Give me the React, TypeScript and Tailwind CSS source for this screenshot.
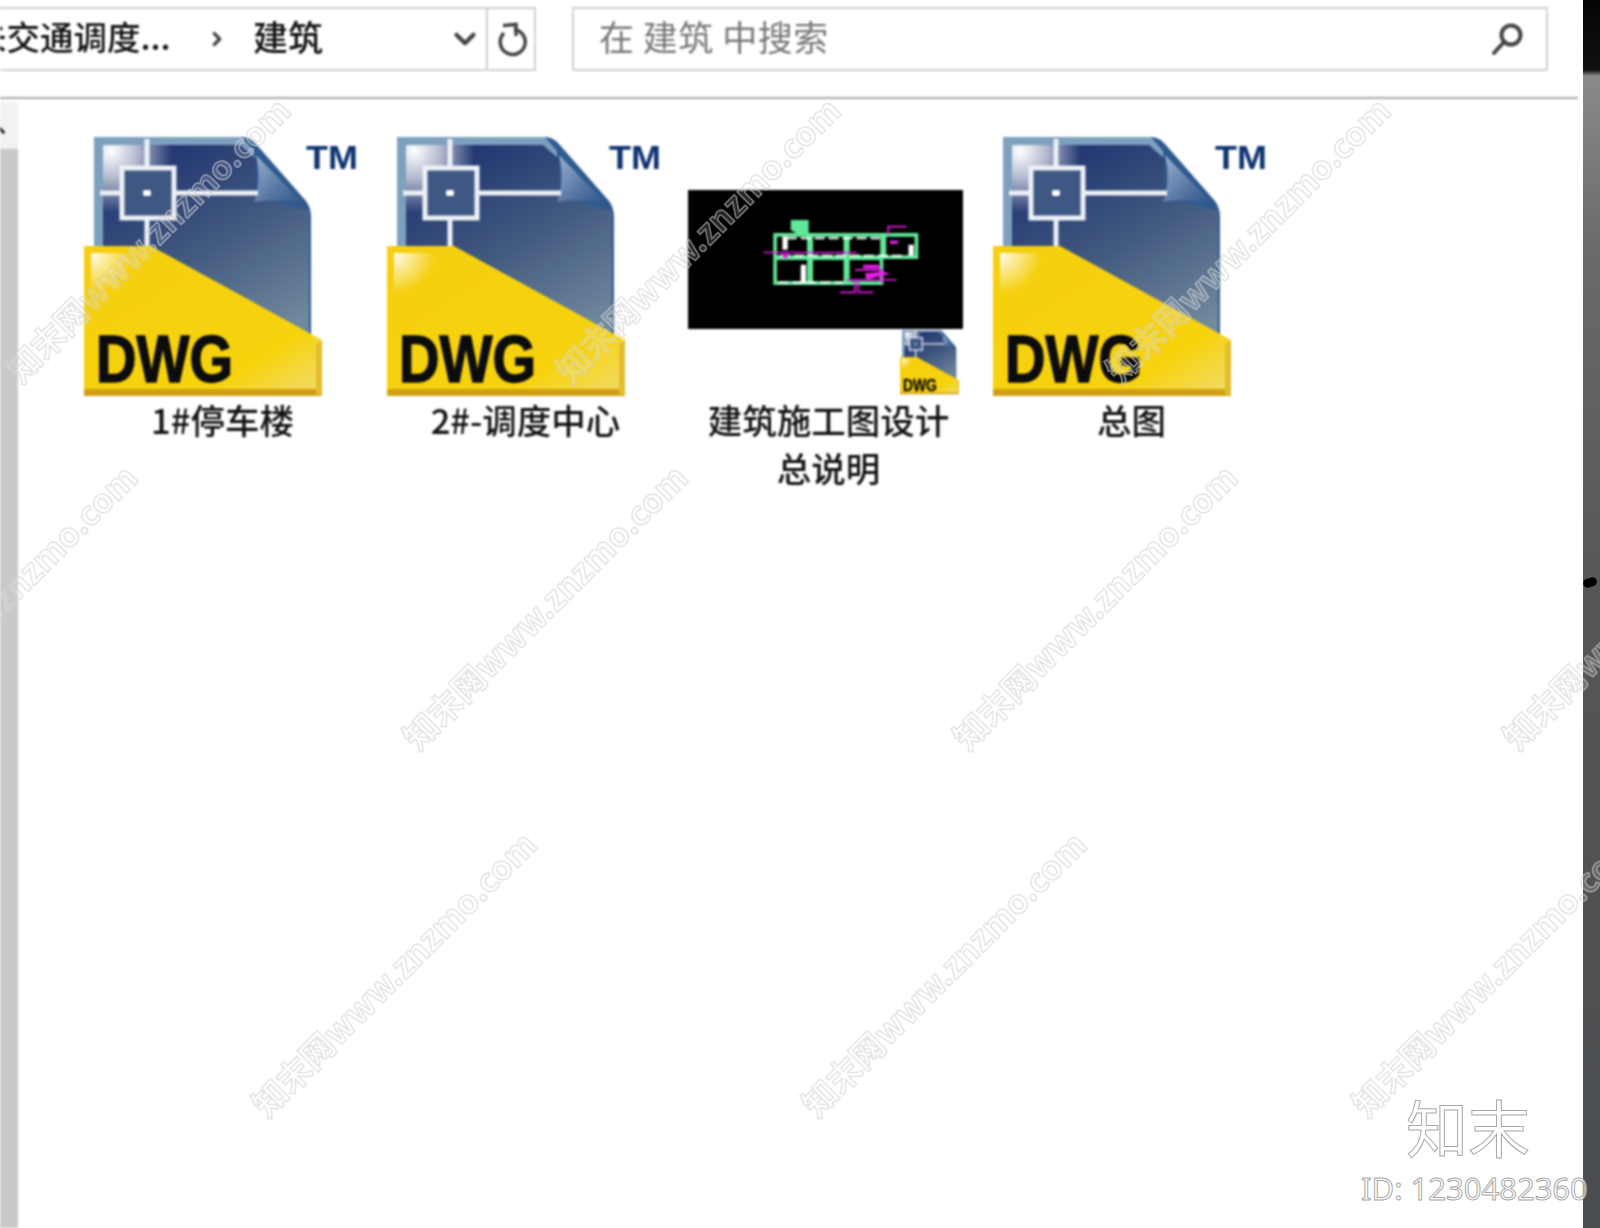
import { ChevronDown, ChevronRight } from 'lucide-react';

const CJK = "font-['Noto_Sans_CJK_SC','Noto_Sans',sans-serif]";

const watermarks = [
  { x: 147, y: 239 },
  { x: 697, y: 239 },
  { x: 1247, y: 239 },
  { x: -6, y: 606 },
  { x: 544, y: 606 },
  { x: 1094, y: 606 },
  { x: 1644, y: 606 },
  { x: 393, y: 973 },
  { x: 943, y: 973 },
  { x: 1493, y: 973 },
];

function DwgIcon({ width, badge }: { width: number; badge?: boolean }) {
  return (
    <svg width={width} height={(width * 258) / 238} viewBox="0 0 238 258" className="block overflow-visible">
      <defs>
        <linearGradient id="docFill" x1="0.2" y1="0" x2="0.8" y2="1">
          <stop offset="0" stopColor="#1e3270" />
          <stop offset="0.5" stopColor="#41587f" />
          <stop offset="1" stopColor="#70899e" />
        </linearGradient>
        <linearGradient id="foldFill" x1="0" y1="0" x2="1" y2="1">
          <stop offset="0" stopColor="#9db3cf" />
          <stop offset="0.5" stopColor="#5c7ca8" />
          <stop offset="1" stopColor="#2a4f86" />
        </linearGradient>
        <radialGradient id="glow" cx="0.08" cy="0.06" r="0.6">
          <stop offset="0" stopColor="#ffffff" />
          <stop offset="0.45" stopColor="#ffffff" stopOpacity="0.65" />
          <stop offset="1" stopColor="#ffffff" stopOpacity="0" />
        </radialGradient>
        <linearGradient id="yellowFill" x1="0" y1="0" x2="1" y2="1">
          <stop offset="0" stopColor="#f5cf10" />
          <stop offset="0.75" stopColor="#f7d30e" />
          <stop offset="1" stopColor="#f0dc70" />
        </linearGradient>
        <radialGradient id="bevel" cx="0" cy="0" r="0.75">
          <stop offset="0" stopColor="#ffffff" stopOpacity="0.95" />
          <stop offset="1" stopColor="#ffffff" stopOpacity="0" />
        </radialGradient>
      </defs>
      {/* sheet */}
      <path d="M10 0H158Q166 0 172 7L222 64Q227 71 227 80V204H10Z" fill="#2e5a90" />
      <path d="M10 0H158L170 14V20H19V110H10Z" fill="#7ea0bf" />
      <path d="M19 8H156L172 22V60L225 74V204H19Z" fill="url(#docFill)" />
      <path d="M19 8H120V110H19Z" fill="url(#glow)" />
      <path d="M172 18Q178 44 170 65Q198 60 222 69Z" fill="url(#foldFill)" />
      {/* crosshair */}
      <path d="M63 2V110M16 56H174" stroke="#eef1f6" strokeWidth="5" fill="none" />
      <rect x="38" y="31" width="52" height="50" fill="#3f5883" stroke="#eef1f6" strokeWidth="5" />
      <rect x="59" y="53" width="8" height="6" rx="2" fill="#ffffff" />
      {/* yellow wedge */}
      <path d="M0 109H67L238 203V258H0Z" fill="url(#yellowFill)" />
      <path d="M7 116H62V170H7Z" fill="url(#bevel)" />
      <path d="M0 252H238V259H0Z" fill="#d09f14" />
      <path d="M232 207L238 203V258H232Z" fill="#e3bd2b" />
      <text
        x="12"
        y="245"
        textLength="137"
        lengthAdjust="spacingAndGlyphs"
        fontFamily="'Liberation Sans', sans-serif"
        fontWeight="700"
        fontSize="67"
        fill="#0c0c0c"
        stroke="#0c0c0c"
        strokeWidth="1.5"
      >
        DWG
      </text>
      {badge && (
        <text
          x="222"
          y="32"
          textLength="52"
          lengthAdjust="spacingAndGlyphs"
          fontFamily="'Liberation Sans', sans-serif"
          fontWeight="700"
          fontSize="33"
          fill="#0d3270"
        >
          TM
        </text>
      )}
    </svg>
  );
}

function PlanThumb() {
  return (
    <div className="w-[275px] h-[139px] bg-black">
      <svg width="275" height="139" viewBox="55 60 823 418" className="block">
        <path d="M362 150H416V190H380L362 180Z" fill="#5fe89a" />
        <path d="M315 195H740V262H315ZM315 265H635V340H315Z" fill="none" stroke="#62e89a" strokeWidth="11" />
        <path d="M420 195V340M530 195V340M640 195V262" stroke="#62e89a" strokeWidth="18" fill="none" />
        <path d="M345 200V240M400 285V340M724 225V258" stroke="#ffffff" strokeWidth="16" fill="none" />
        <path d="M330 258H700M325 338H520M350 205H630" stroke="#ffffff" strokeWidth="6" strokeDasharray="30 12" fill="none" />
        <path d="M280 248H560M530 330H680M510 368H555V335M565 335V368H610M655 195V170H710M555 300H635V340"
          stroke="#e81ee8" strokeWidth="5" fill="none" />
        <path d="M580 285H625L632 296H580ZM585 310L640 305L660 312L590 330Z" fill="#e81ee8" />
        <rect x="660" y="212" width="24" height="10" fill="#e81ee8" />
        <rect x="338" y="252" width="16" height="12" fill="#e81ee8" />
      </svg>
    </div>
  );
}

function Label({ lines }: { lines: string[] }) {
  return (
    <div className={`text-center text-[#111] text-[34.5px] leading-[48px] -mt-[1px] font-medium ${CJK}`}>
      {lines.map((l) => (
        <div key={l}>{l}</div>
      ))}
    </div>
  );
}

export default function App() {
  return (
    <div className="relative flex w-[1600px] h-[1228px] overflow-hidden bg-white">
      <div className="flex flex-col w-[1583px] blur-[0.8px]">
        {/* Address and search bars */}
        <div className="w-[1578px] h-[99px] border-b-2 border-[#a8a8a8] flex items-start gap-[36px] pt-[7px]">
          <div className="flex w-[536px] h-[64px] border-2 border-l-0 border-[#d0d0d0] overflow-hidden">
            <div className={`flex-1 flex items-center text-[35px] text-[#111] font-medium whitespace-nowrap pb-[5px] ${CJK}`}>
              <span className="-ml-[27px] w-[199px] shrink-0 text-[33.5px]">未交通调度...</span>
              <ChevronRight size={22} strokeWidth={3.5} className="text-[#444] ml-[34px] mt-[5px] shrink-0" />
              <span className="ml-[25px]">建筑</span>
              <ChevronDown size={34} strokeWidth={3} className="text-[#444] ml-auto mr-[4px] mt-[5px] shrink-0" />
            </div>
            <div className="w-[48px] border-l-2 border-[#d0d0d0] flex items-center justify-center text-[#444]">
              <svg width="38" height="38" viewBox="14 14 38 38" fill="none" stroke="currentColor" strokeWidth="3.5" className="ml-[5px]">
                <path d="M23 27A12.5 12.5 0 1 0 33 23.5" />
                <path d="M22 19.5L35 18.5V30" />
              </svg>
            </div>
          </div>
          <div className={`flex items-center w-[976px] h-[64px] border-2 border-[#d0d0d0] pl-[25px] pr-[22px] ${CJK}`}>
            <span className="text-[35px] text-[#777] pb-[5px] tracking-[0.5px]">在 建筑 中搜索</span>
            <svg width="34" height="34" viewBox="0 0 34 34" className="ml-auto text-[#444]" fill="none" stroke="currentColor" strokeWidth="4">
              <circle cx="21" cy="13" r="9.5" />
              <path d="M14 20L4 31" strokeLinecap="round" />
            </svg>
          </div>
        </div>

        <div className="flex flex-1">
          {/* Navigation pane edge */}
          <div className="w-[18px] flex flex-col mt-[3px]">
            <div className="h-[47px] bg-[#f2f2f2] overflow-hidden flex items-center">
              <ChevronDown size={18} strokeWidth={4} className="rotate-180 -ml-[10px] mt-[8px] text-[#222]" />
            </div>
            <div className="flex-1 bg-[#c9c9c9]" />
          </div>

          {/* File tiles */}
          <div className="flex items-start pl-[53px] pt-[38px]">
            <div className="w-[303px]">
              <div className="pl-[13px] h-[259px]"><DwgIcon width={238} badge /></div>
              <Label lines={['1#停车楼']} />
            </div>
            <div className="w-[303px]">
              <div className="pl-[13px] h-[259px]"><DwgIcon width={238} badge /></div>
              <Label lines={['2#-调度中心']} />
            </div>
            <div className="w-[303px]">
              <div className="relative pl-[11px] pt-[53px] h-[259px]">
                <PlanThumb />
                <div className="absolute left-[223px] top-[193px]"><DwgIcon width={59} /></div>
              </div>
              <Label lines={['建筑施工图设计', '总说明']} />
            </div>
            <div className="w-[303px]">
              <div className="pl-[13px] h-[259px]"><DwgIcon width={238} badge /></div>
              <Label lines={['总图']} />
            </div>
          </div>
        </div>
      </div>

      {/* Desktop behind the window */}
      <div className="w-[17px] bg-[linear-gradient(to_bottom,#050505_0,#111_70px,#8a8a8a_76px,#6a6a6a_250px,#565656_600px,#4a4d50_100%)]" />
      <div className="absolute left-[1583px] top-[578px] w-[14px] h-[9px] rounded-full bg-black -rotate-[18deg]" />

      {/* Tiled watermark */}
      {watermarks.map((w) => (
        <div
          key={`${w.x}-${w.y}`}
          className={`absolute w-0 h-0 flex items-center justify-center -rotate-45 pointer-events-none text-[33.5px] font-bold whitespace-nowrap text-white/15 blur-[0.4px] [-webkit-text-stroke:1.5px_rgba(205,205,205,0.55)] ${CJK}`}
          style={{ left: w.x, top: w.y }}
        >
          知末网www.znzmo.com
        </div>
      ))}

      {/* Corner logo */}
      <div className={`absolute left-[1406px] top-[1088px] text-[62px] leading-[76px] text-white/40 [-webkit-text-stroke:1px_#a8a8a8] ${CJK}`}>
        知末
      </div>
      <div className="absolute left-[1361px] top-[1168px] text-[31px] leading-[40px] font-['Noto_Sans',sans-serif] text-white/60 [-webkit-text-stroke:1px_#a8a8a8] whitespace-nowrap">
        ID: 1230482360
      </div>
    </div>
  );
}
